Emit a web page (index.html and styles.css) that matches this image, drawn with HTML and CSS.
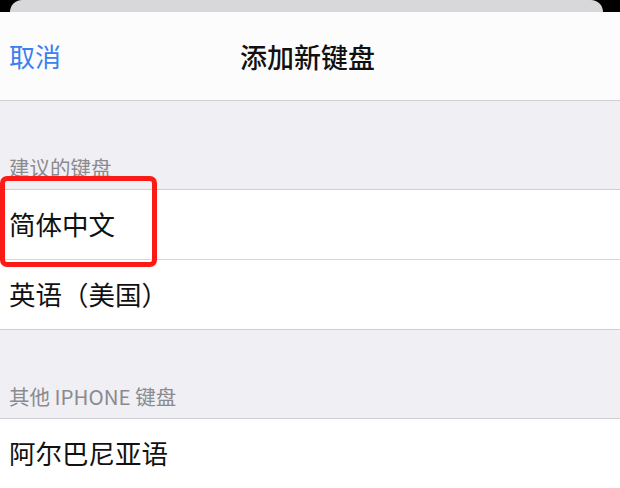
FILE: index.html
```html
<!DOCTYPE html>
<html lang="zh-CN">
<head>
    <meta charset="UTF-8">
    <meta name="viewport" content="width=device-width, initial-scale=1.0">
    <title>添加新键盘</title>
    <link rel="stylesheet" href="styles.css">
</head>
<body>
    <div class="back-card"></div>

    <div class="sheet">
        <div class="nav-bar">
            <a href="#" class="cancel-btn">取消</a>
            <h1 class="nav-title">添加新键盘</h1>
        </div>

        <div class="group-header">建议的键盘</div>
        <div class="group">
            <div class="row">
                <span class="row-label">简体中文</span>
                <div class="highlight"></div>
            </div>
            <div class="row">
                <span class="row-label">英语（美国）</span>
            </div>
        </div>

        <div class="group-header">其他 IPHONE 键盘</div>
        <div class="group">
            <div class="row">
                <span class="row-label">阿尔巴尼亚语</span>
            </div>
        </div>
    </div>
</body>
</html>
```

FILE: styles.css
```css
body {
    margin: 0;
    background: #000;
    font-family: "Noto Sans CJK SC", "Noto Sans", sans-serif;
    overflow: hidden;
}

.back-card {
    height: 12px;
    margin: 0 17px 0 10px;
    background: #d8d8da;
    border-radius: 20px 20px 0 0;
}

.sheet {
    background: #efeff4;
    min-height: 476px;
}

.nav-bar {
    position: relative;
    height: 88px;
    background: #fcfcfc;
    border-bottom: 1px solid #cfcfd3;
    display: flex;
    align-items: center;
    justify-content: center;
}

.cancel-btn {
    position: absolute;
    left: 9px;
    top: 50%;
    transform: translateY(-50%);
    color: #3a80f0;
    font-size: 26px;
    text-decoration: none;
    line-height: 1;
}

.nav-title {
    margin: 0 0 0 -5px;
    font-size: 27px;
    font-weight: 500;
    color: #111;
    line-height: 1;
}

.group-header {
    height: 88px;
    display: flex;
    align-items: flex-end;
    padding: 0 9px 8px;
    box-sizing: border-box;
    font-size: 20.5px;
    line-height: 28px;
    color: #8a8a8f;
}

.group {
    background: #fff;
    border-top: 1px solid #cfcfd3;
    border-bottom: 1px solid #cfcfd3;
}

.group:last-child {
    border-bottom: none;
}

.row {
    position: relative;
    height: 69px;
    display: flex;
    align-items: center;
    padding-left: 9px;
    border-bottom: 1px solid #d6d6da;
}

.group .row:last-child {
    border-bottom: none;
}

.group:last-child .row:last-child {
    border-bottom: 1px solid #d6d6da;
    margin-left: 9px;
    padding-left: 0;
}

.row-label {
    font-size: 26.5px;
    color: #111;
    line-height: 1;
}

.highlight {
    position: absolute;
    left: 0;
    top: -14px;
    width: 147px;
    height: 81px;
    border: 5px solid #fb1b16;
    border-radius: 7px;
}
```
